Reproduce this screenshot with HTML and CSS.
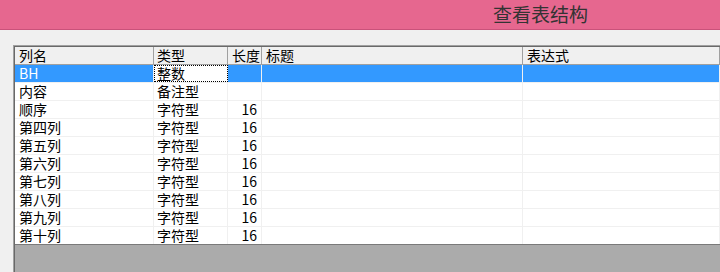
FILE: index.html
```html
<!DOCTYPE html>
<html lang="zh-CN">
<head>
    <meta charset="UTF-8">
    <title>查看表结构</title>
    <link rel="stylesheet" href="styles.css">
</head>
<body>
    <div class="titlebar">查看表结构</div>
    <div class="workspace">
        <div class="grid-outer">
            <div class="grid">
                <div class="row head">
                    <div class="cell">列名</div>
                    <div class="cell type">类型</div>
                    <div class="cell">长度</div>
                    <div class="cell">标题</div>
                    <div class="cell">表达式</div>
                </div>
                <div class="row selected">
                    <div class="cell">BH</div>
                    <div class="cell type focus">整数</div>
                    <div class="cell num"></div>
                    <div class="cell"></div>
                    <div class="cell"></div>
                </div>
                <div class="row">
                    <div class="cell">内容</div>
                    <div class="cell type">备注型</div>
                    <div class="cell num"></div>
                    <div class="cell"></div>
                    <div class="cell"></div>
                </div>
                <div class="row">
                    <div class="cell">顺序</div>
                    <div class="cell type">字符型</div>
                    <div class="cell num">16</div>
                    <div class="cell"></div>
                    <div class="cell"></div>
                </div>
                <div class="row">
                    <div class="cell">第四列</div>
                    <div class="cell type">字符型</div>
                    <div class="cell num">16</div>
                    <div class="cell"></div>
                    <div class="cell"></div>
                </div>
                <div class="row">
                    <div class="cell">第五列</div>
                    <div class="cell type">字符型</div>
                    <div class="cell num">16</div>
                    <div class="cell"></div>
                    <div class="cell"></div>
                </div>
                <div class="row">
                    <div class="cell">第六列</div>
                    <div class="cell type">字符型</div>
                    <div class="cell num">16</div>
                    <div class="cell"></div>
                    <div class="cell"></div>
                </div>
                <div class="row">
                    <div class="cell">第七列</div>
                    <div class="cell type">字符型</div>
                    <div class="cell num">16</div>
                    <div class="cell"></div>
                    <div class="cell"></div>
                </div>
                <div class="row">
                    <div class="cell">第八列</div>
                    <div class="cell type">字符型</div>
                    <div class="cell num">16</div>
                    <div class="cell"></div>
                    <div class="cell"></div>
                </div>
                <div class="row">
                    <div class="cell">第九列</div>
                    <div class="cell type">字符型</div>
                    <div class="cell num">16</div>
                    <div class="cell"></div>
                    <div class="cell"></div>
                </div>
                <div class="row last">
                    <div class="cell">第十列</div>
                    <div class="cell type">字符型</div>
                    <div class="cell num">16</div>
                    <div class="cell"></div>
                    <div class="cell"></div>
                </div>
            </div>
        </div>
    </div>
</body>
</html>
```

FILE: styles.css
```css
body {
    margin: 0;
    overflow: hidden;
    background-color: #f0f0f0;
    font-family: "Noto Sans CJK SC", sans-serif;
    color: #000;
}
.titlebar {
    height: 29px;
    line-height: 27px;
    padding-left: 493px;
    background-color: #e6678f;
    border-bottom: 1px solid #c9527a;
    color: #333;
    font-size: 19px;
}
.workspace {
    padding: 15px 0 0 13px;
}
.grid-outer {
    border-top: 1px solid #a0a0a0;
    border-left: 1px solid #a0a0a0;
}
.grid {
    border-top: 1px solid #696969;
    border-left: 1px solid #696969;
    background-color: #ababab;
    height: 225px;
}
.row {
    display: grid;
    grid-template-columns: 139px 74px 34px 261px 1fr;
    height: 18px;
    box-sizing: border-box;
    border-bottom: 1px solid #f0f0f0;
    background-color: #fff;
    font-size: 14px;
    line-height: 17px;
}
.row.last {
    border-bottom-color: #7a7a7a;
}
.cell {
    border-right: 1px solid #f0f0f0;
    padding: 0 3px 0 4px;
    white-space: nowrap;
}
.cell.type {
    padding-left: 3px;
}
.cell.num {
    text-align: right;
    padding-right: 4px;
}
.head {
    background-color: #f0f0f0;
    border-bottom-color: #a0a0a0;
}
.head .cell {
    border-right-color: #a0a0a0;
}
.selected {
    background-color: #3399ff;
    color: #fff;
}
.selected .cell.focus {
    background-color: #fff;
    color: #000;
    outline: 1px dotted #000;
    outline-offset: -1px;
}
```
